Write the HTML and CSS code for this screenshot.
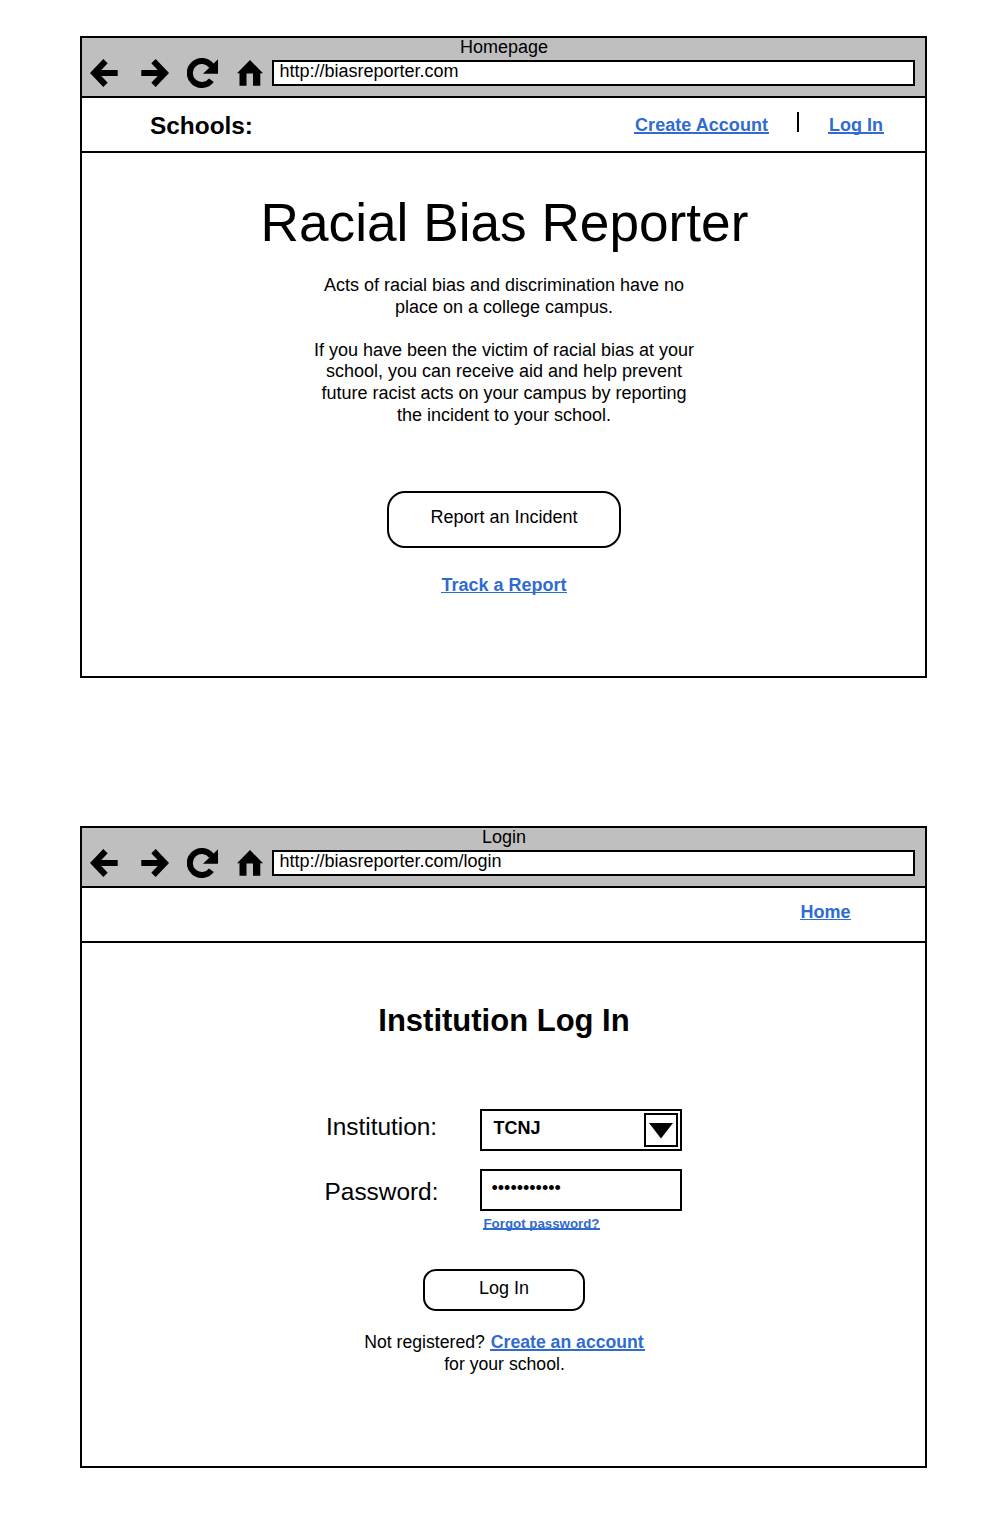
FILE: index.html
```
<!DOCTYPE html>
<html lang="en">
<head>
<meta charset="utf-8">
<title>Racial Bias Reporter</title>
<link rel="stylesheet" href="styles.css">
</head>
<body>
<svg class="defs" width="0" height="0" aria-hidden="true">
  <symbol id="back" viewBox="0 0 28 28"><path d="M0 14 13.3 0 17.7 4.3 11.3 11H27.7V17H11.3L17.7 23.7 13.3 28Z"/></symbol>
  <symbol id="forward" viewBox="0 0 28 28"><path d="M28 14 14.7 0 10.3 4.3 16.7 11H.3V17H16.7L10.3 23.7 14.7 28Z"/></symbol>
  <symbol id="reload" viewBox="0 0 31 30"><path d="M24.4 22.2A12 12 0 1 1 24.6 8.1" fill="none" stroke="#000" stroke-width="6"/><path d="M31 1.3V15.8H16Z"/></symbol>
  <symbol id="home" viewBox="0 0 26 26"><path d="M13 0 26 13.3H23.3V25.8H16V13.5H9.5V25.8H2.5V13.3H0Z"/></symbol>
</svg>

<main class="board">
  <section class="window">
    <header class="chrome">
      <div class="chrome-title">Homepage</div>
      <div class="toolbar">
        <svg class="icon back"><use href="#back"/></svg>
        <svg class="icon forward"><use href="#forward"/></svg>
        <svg class="icon reload"><use href="#reload"/></svg>
        <svg class="icon home"><use href="#home"/></svg>
        <div class="address">http://biasreporter.com</div>
      </div>
    </header>
    <nav class="nav">
      <span class="nav-label">Schools:</span>
      <a class="link create">Create Account</a>
      <span class="divider"></span>
      <a class="link">Log In</a>
    </nav>
    <div class="content home-content">
      <h1 class="title">Racial Bias Reporter</h1>
      <div class="intro">
        <p>Acts of racial bias and discrimination have no<br>place on a college campus.</p>
        <p>If you have been the victim of racial bias at your<br>school, you can receive aid and help prevent<br>future racist acts on your campus by reporting<br>the incident to your school.</p>
      </div>
      <button class="button report">Report an Incident</button>
      <a class="link thin">Track a Report</a>
    </div>
  </section>

  <section class="window">
    <header class="chrome">
      <div class="chrome-title">Login</div>
      <div class="toolbar">
        <svg class="icon back"><use href="#back"/></svg>
        <svg class="icon forward"><use href="#forward"/></svg>
        <svg class="icon reload"><use href="#reload"/></svg>
        <svg class="icon home"><use href="#home"/></svg>
        <div class="address">http://biasreporter.com/login</div>
      </div>
    </header>
    <nav class="nav nav-login">
      <a class="link thin">Home</a>
    </nav>
    <div class="content login-content">
      <h2 class="heading">Institution Log In</h2>
      <div class="form">
        <span class="label">Institution:</span>
        <div class="field select">
          <span>TCNJ</span>
          <span class="arrow"><svg width="24" height="16" viewBox="0 0 24 16"><path d="M0 0H24L12 15.5Z"/></svg></span>
        </div>
        <span class="label label-password">Password:</span>
        <div>
          <div class="field password">•••••••••••</div>
          <a class="link forgot">Forgot password?</a>
        </div>
      </div>
      <button class="button login">Log In</button>
      <p class="register">Not registered? <a class="link">Create an account</a><br>for your school.</p>
    </div>
  </section>
</main>
</body>
</html>
```
FILE: styles.css
```
* { box-sizing: border-box; }

body {
  margin: 0;
  background: #fff;
  color: #000;
  font: 18px/22px "Liberation Sans", Arial, sans-serif;
}

h1, h2, p { margin: 0; }

.defs { display: block; height: 0; }

.board {
  display: flex;
  flex-direction: column;
  gap: 148px;
  padding: 36px 81px 50px 80px;
}

.window {
  height: 642px;
  border: 2px solid #000;
}

.chrome {
  height: 60px;
  border-bottom: 2px solid #000;
  background: #bfbfbf;
}

.chrome-title {
  height: 22px;
  padding-left: 1px;
  line-height: 18px;
  text-align: center;
}

.toolbar {
  display: flex;
  align-items: center;
  height: 26px;
  padding: 0 10px 0 7.7px;
}

.icon { flex: none; width: 28px; height: 28px; }
.forward { margin-left: 23.6px; }
.reload { width: 31px; height: 30px; margin-left: 17.4px; }
.icon.home { width: 26px; height: 26px; margin-left: 19px; }

.address {
  flex: 1;
  height: 26px;
  margin-left: 9.3px;
  padding-left: 5.5px;
  border: 2px solid #000;
  background: #fff;
  line-height: 18px;
}

.nav {
  display: flex;
  align-items: flex-start;
  height: 55px;
  padding: 14px 41px 0 68px;
  border-bottom: 2px solid #000;
}

.nav-label {
  flex: 1;
  font-size: 24.4px;
  font-weight: bold;
  line-height: 28px;
}

.nav .link { margin-top: 2px; }

.nav .create { letter-spacing: 0.04px; }

.divider {
  width: 2px;
  height: 20px;
  margin: 0 29px 0 28px;
  background: #000;
}

.nav-login {
  justify-content: flex-end;
  padding: 11px 74px 0 0;
}

.link {
  padding: 0 1px;
  background: linear-gradient(#2f6bd0, #2f6bd0) 0 18px / 100% 2px no-repeat;
  color: #2f6bd0;
  font-weight: bold;
}

.link.thin {
  padding: 0 0.5px;
  background-size: 100% 1px;
}

.content {
  display: flex;
  flex-direction: column;
  align-items: center;
  padding-left: 1px;
}

.home-content { padding-top: 40px; }

.title {
  padding-left: 1px;
  font-size: 53.2px;
  font-weight: normal;
  line-height: 60px;
}

.intro {
  display: flex;
  flex-direction: column;
  gap: 21.6px;
  height: 216px;
  margin-top: 22px;
  line-height: 21.6px;
  text-align: center;
}

.button {
  display: flex;
  align-items: flex-start;
  justify-content: center;
  border: 2px solid #000;
  background: #fff;
  color: #000;
  font: 18px/22px "Liberation Sans", Arial, sans-serif;
}

.report {
  width: 234px;
  height: 57px;
  margin-bottom: 26px;
  padding: 13px 0 0;
  border-radius: 18px;
}

.login-content { padding-top: 60px; }

.heading {
  margin-bottom: 70px;
  font-size: 31px;
  line-height: 36px;
}

.form {
  display: grid;
  grid-template-columns: 120px 202px;
  grid-template-rows: 42px auto;
  align-content: start;
  gap: 18px 38px;
  height: 160px;
  margin-right: 4px;
}

.label {
  padding: 4px 1px 0 0;
  font-size: 24.4px;
  line-height: 28px;
  text-align: center;
}

.label-password { padding-top: 9px; }

.field {
  height: 42px;
  border: 2px solid #000;
}

.select {
  display: flex;
  justify-content: space-between;
  padding: 2px 2px 0 11.5px;
  font-weight: bold;
}

.select > span:first-child { margin-top: 4px; }

.arrow {
  display: flex;
  justify-content: center;
  width: 34px;
  height: 34px;
  padding-top: 8px;
  border: 2px solid #000;
}

.password { padding: 6px 0 0 9.5px; }

.link.forgot {
  display: block;
  width: max-content;
  margin: 4px 0 0 3px;
  padding: 0 0.5px;
  background-position: 0 13px;
  font-size: 13.3px;
  line-height: 17px;
}

.login {
  width: 162px;
  height: 42px;
  padding: 6px 0 0;
  border-radius: 13px;
}

.register {
  margin-top: 21px;
  padding-left: 1px;
  font-size: 17.65px;
  line-height: 21.6px;
  text-align: center;
}

.register .link { background-position: 0 17px; }
```
